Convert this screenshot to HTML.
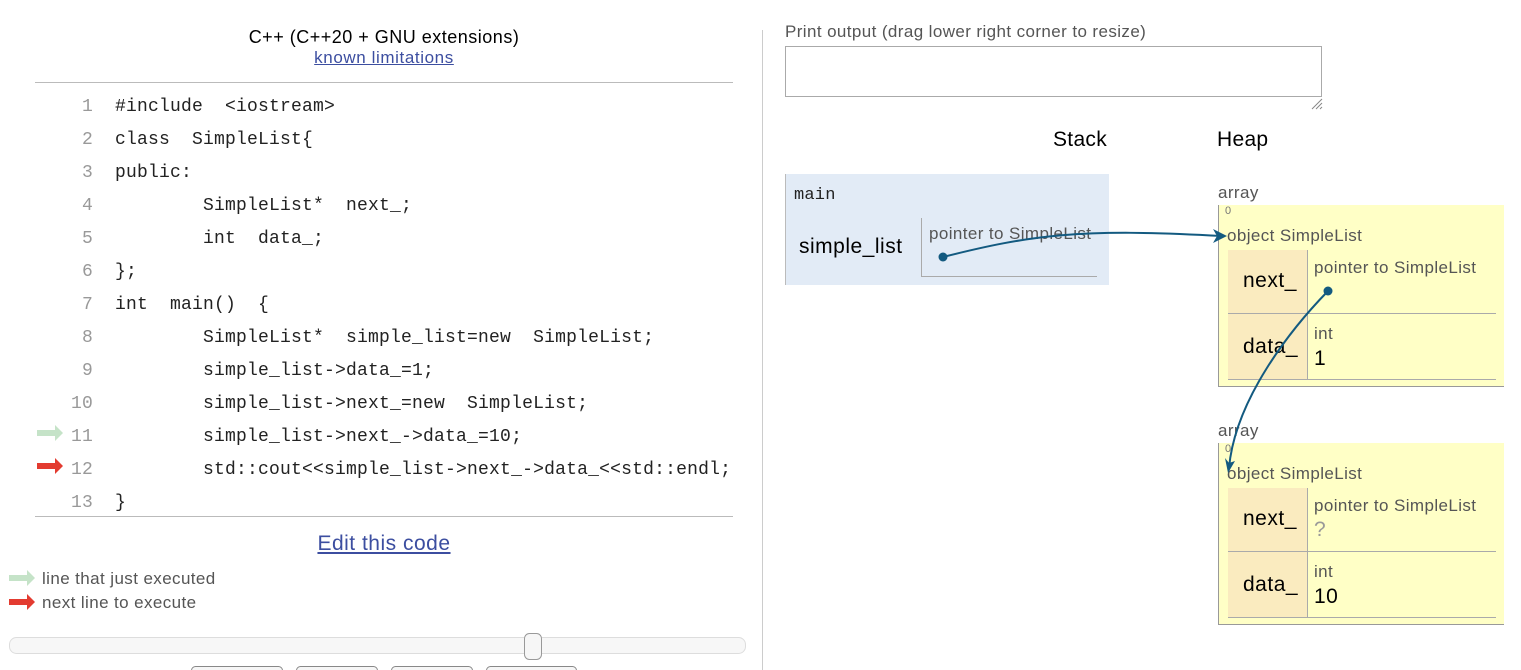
<!DOCTYPE html>
<html><head><meta charset="utf-8"><style>
body{margin:0;width:1521px;height:670px;background:#fff;position:relative;overflow:hidden;font-family:"Liberation Sans",sans-serif;}
.a{position:absolute;white-space:pre;}
.code{font-family:"Liberation Mono",monospace;font-size:18px;color:#222;line-height:33px;letter-spacing:0.2px;}
.ln{color:#999;text-align:right;width:40px;}
.lbl{color:#555;font-size:17px;letter-spacing:0.4px;}
.big{font-size:21px;letter-spacing:0.5px;}
</style></head><body>
<div class="a" style="left:0;width:768px;top:27px;text-align:center;font-size:18px;letter-spacing:0.5px;color:#000">C++ (C++20 + GNU extensions)</div>
<div class="a" style="left:0;width:768px;top:48px;text-align:center;font-size:17px;letter-spacing:0.6px;color:#3c4ea0;text-decoration:underline">known limitations</div>
<div class="a" style="left:35px;top:82px;width:698px;height:1px;background:#bbb"></div>
<div class="a" style="left:35px;top:516px;width:698px;height:1px;background:#bbb"></div>
<div class="a" style="left:762px;top:30px;width:1px;height:640px;background:#ccc"></div>

<div class="a code ln" style="left:53px;top:91px">1
2
3
4
5
6
7
8
9
10
11
12
13</div>
<div class="a code" style="left:115px;top:91px">#include  &lt;iostream&gt;
class  SimpleList{
public:
        SimpleList*  next_;
        int  data_;
};
int  main()  {
        SimpleList*  simple_list=new  SimpleList;
        simple_list-&gt;data_=1;
        simple_list-&gt;next_=new  SimpleList;
        simple_list-&gt;next_-&gt;data_=10;
        std::cout&lt;&lt;simple_list-&gt;next_-&gt;data_&lt;&lt;std::endl;
}</div>
<svg class="a" style="left:0;top:0" width="770" height="670">
<path d="M37 430h18v-5l8 8-8 8v-5h-18z" fill="#c5e3c8"/>
<path d="M37 463h18v-5l8 8-8 8v-5h-18z" fill="#e33b30"/>
<path d="M9 575h18v-5l8 8-8 8v-5h-18z" fill="#c5e3c8"/>
<path d="M9 599h18v-5l8 8-8 8v-5h-18z" fill="#e33b30"/>
<rect x="9.5" y="637.5" width="736" height="16" rx="7" fill="#f7f7f7" stroke="#ddd"/>
<rect x="524.5" y="633.5" width="17" height="26" rx="5" fill="#f6f6f6" stroke="#999"/>
<rect x="191.5" y="666.5" width="91" height="10" rx="4" fill="#f6f6f6" stroke="#888"/>
<rect x="296.5" y="666.5" width="81" height="10" rx="4" fill="#f6f6f6" stroke="#888"/>
<rect x="391.5" y="666.5" width="81" height="10" rx="4" fill="#f6f6f6" stroke="#888"/>
<rect x="486.5" y="666.5" width="90" height="10" rx="4" fill="#f6f6f6" stroke="#888"/>
</svg>
<div class="a" style="left:0;width:768px;top:532px;text-align:center;font-size:21px;letter-spacing:0.5px;color:#3c4ea0;text-decoration:underline">Edit this code</div>
<div class="a" style="left:42px;top:569px;font-size:17px;letter-spacing:0.4px;color:#555">line that just executed</div>
<div class="a" style="left:42px;top:593px;font-size:17px;letter-spacing:0.4px;color:#555">next line to execute</div>

<div class="a" style="left:785px;top:22px;font-size:17px;letter-spacing:0.4px;color:#555">Print output (drag lower right corner to resize)</div>
<div class="a" style="left:785px;top:46px;width:535px;height:49px;border:1px solid #aaa"></div>
<div class="a" style="left:1053px;top:128px;font-size:21px;letter-spacing:0.3px;color:#000">Stack</div>
<div class="a" style="left:1217px;top:128px;font-size:21px;letter-spacing:0.3px;color:#000">Heap</div>

<div class="a" style="left:785px;top:174px;width:323px;height:111px;background:#e2ebf6;border-left:1px solid #bbb"></div>
<div class="a code" style="left:794px;top:181px;font-size:17px;line-height:30px">main</div>
<div class="a big" style="left:799px;top:235px">simple_list</div>
<div class="a" style="left:921px;top:218px;width:175px;height:58px;border-left:1px solid #aaa;border-bottom:1px solid #aaa"></div>
<div class="a lbl" style="left:929px;top:224px">pointer to SimpleList</div>

<div class="a lbl" style="left:1218px;top:183px">array</div>
<div class="a" style="left:1218px;top:205px;width:285px;height:181px;background:#ffffc6;border-left:1px solid #999;border-bottom:1px solid #999"></div>
<div class="a" style="left:1225px;top:205px;font-size:11px;color:#777">0</div>
<div class="a lbl" style="left:1227px;top:226px">object SimpleList</div>
<div class="a" style="left:1228px;top:250px;width:79px;height:63px;background:#faebbf"></div>
<div class="a" style="left:1228px;top:314px;width:79px;height:65px;background:#faebbf"></div>
<div class="a" style="left:1307px;top:250px;width:1px;height:129px;background:#aaa"></div>
<div class="a" style="left:1228px;top:313px;width:268px;height:1px;background:#aaa"></div>
<div class="a" style="left:1228px;top:379px;width:268px;height:1px;background:#aaa"></div>
<div class="a big" style="left:1243px;top:269px">next_</div>
<div class="a lbl" style="left:1314px;top:258px">pointer to SimpleList</div>
<div class="a big" style="left:1243px;top:335px">data_</div>
<div class="a lbl" style="left:1314px;top:324px">int</div>
<div class="a big" style="left:1314px;top:347px">1</div>

<div class="a lbl" style="left:1218px;top:421px">array</div>
<div class="a" style="left:1218px;top:443px;width:285px;height:181px;background:#ffffc6;border-left:1px solid #999;border-bottom:1px solid #999"></div>
<div class="a" style="left:1225px;top:443px;font-size:11px;color:#777">0</div>
<div class="a lbl" style="left:1227px;top:464px">object SimpleList</div>
<div class="a" style="left:1228px;top:488px;width:79px;height:63px;background:#faebbf"></div>
<div class="a" style="left:1228px;top:552px;width:79px;height:65px;background:#faebbf"></div>
<div class="a" style="left:1307px;top:488px;width:1px;height:129px;background:#aaa"></div>
<div class="a" style="left:1228px;top:551px;width:268px;height:1px;background:#aaa"></div>
<div class="a" style="left:1228px;top:617px;width:268px;height:1px;background:#aaa"></div>
<div class="a big" style="left:1243px;top:507px">next_</div>
<div class="a lbl" style="left:1314px;top:496px">pointer to SimpleList</div>
<div class="a big" style="left:1314px;top:518px;color:#999">?</div>
<div class="a big" style="left:1243px;top:573px">data_</div>
<div class="a lbl" style="left:1314px;top:562px">int</div>
<div class="a big" style="left:1314px;top:585px">10</div>

<svg class="a" style="left:0;top:0" width="1521" height="670">
<g stroke="#135a80" stroke-width="2" fill="none">
<path d="M943 257 C1030 235 1080 228 1222 236"/>
<path d="M1328 291 C1290 330 1235 400 1229 468"/>
</g>
<circle cx="943" cy="257" r="4.5" fill="#135a80"/>
<circle cx="1328" cy="291" r="4.5" fill="#135a80"/>
<path d="M1227 236 l-14 -7 l4 7 l-4 7z" fill="#135a80"/>
<path d="M1228 473 l-3 -15 l4 5 l6 -2z" fill="#135a80"/>
<path d="M1312 109 l10 -10 M1316 109 l6 -6 M1320 109 l2 -2" stroke="#888" stroke-width="1"/>
</svg>
</body></html>
